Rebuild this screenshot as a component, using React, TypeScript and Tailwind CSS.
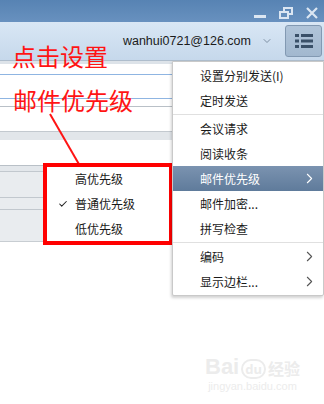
import { ChevronRight, ChevronDown, Check } from 'lucide-react';

const cjk = { fontFamily: '"Noto Sans CJK SC", "Noto Sans", sans-serif' };

type Item = { label: string; sub?: boolean; active?: boolean; sep?: boolean };

const menuItems: Item[] = [
  { label: '设置分别发送(I)' },
  { label: '定时发送' },
  { label: '', sep: true },
  { label: '会议请求' },
  { label: '阅读收条' },
  { label: '邮件优先级', sub: true, active: true },
  { label: '邮件加密...' },
  { label: '拼写检查' },
  { label: '', sep: true },
  { label: '编码', sub: true },
  { label: '显示边栏...', sub: true },
];

function WindowControls() {
  return (
    <div className="flex items-center gap-[13px] pr-[6px] pt-[1px]">
      <div className="mt-[7px] h-[3px] w-[12px] bg-[#dbe6f2]" />
      <svg width="14" height="12" viewBox="0 0 14 12" fill="none" stroke="#dbe6f2" strokeWidth="2">
        <rect x="5" y="1" width="8" height="6" />
        <rect x="1" y="5" width="8" height="6" fill="#6690bd" />
      </svg>
      <svg width="12" height="12" viewBox="0 0 12 12" stroke="#dbe6f2" strokeWidth="2.2">
        <path d="M1 1 L11 11 M11 1 L1 11" />
      </svg>
    </div>
  );
}

function ListIcon() {
  return (
    <svg width="18" height="16" viewBox="0 0 18 16" fill="#3a5068">
      <rect x="0" y="1" width="4" height="3" />
      <rect x="6" y="1" width="12" height="3" />
      <rect x="0" y="6.5" width="4" height="3" />
      <rect x="6" y="6.5" width="12" height="3" />
      <rect x="0" y="12" width="4" height="3" />
      <rect x="6" y="12" width="12" height="3" />
    </svg>
  );
}

function MainMenu() {
  return (
    <div
      className="absolute left-[172px] top-[61px] w-[152px] rounded-b-[2px] border border-[#c9c9c9] bg-white py-[1px] shadow-[-1px_2px_3px_rgba(0,0,0,0.18)]"
      style={cjk}
    >
      {menuItems.map((it, i) =>
        it.sep ? (
          <div key={i} className="my-[1px] h-px bg-[#e0e0e0]" />
        ) : (
          <div
            key={i}
            className={
              it.active
                ? 'flex h-[25px] items-center justify-between bg-gradient-to-b from-[#7b93b0] to-[#5f7b9b] pl-[27px] pr-[5px] text-[12px] text-white'
                : 'flex h-[25px] items-center justify-between pl-[27px] pr-[5px] text-[12px] text-[#1a1a1a]'
            }
          >
            <span>{it.label}</span>
            {it.sub && (
              <ChevronRight
                size={17}
                strokeWidth={1.5}
                className={it.active ? 'text-white' : 'text-[#555]'}
              />
            )}
          </div>
        )
      )}
    </div>
  );
}

function PriorityMenu() {
  return (
    <div
      className="absolute left-[43px] top-[163px] flex h-[82px] w-[130px] flex-col justify-center border-[4px] border-[#ff0000] bg-white text-[12px] text-[#1a1a1a]"
      style={cjk}
    >
      <div className="flex h-[25px] items-center pl-[28px]">高优先级</div>
      <div className="relative flex h-[25px] items-center pl-[28px]">
        <Check size={10} strokeWidth={2.5} className="absolute left-[11px] text-[#222]" />
        普通优先级
      </div>
      <div className="flex h-[25px] items-center pl-[28px]">低优先级</div>
    </div>
  );
}

function Annotations() {
  return (
    <>
      <div
        className="absolute left-[12px] top-[40px] text-[24px] leading-[32px] text-[#ff1414]"
        style={cjk}
      >
        点击设置
      </div>
      <div
        className="absolute left-[13px] top-[84px] text-[24px] leading-[32px] text-[#ff1414]"
        style={cjk}
      >
        邮件优先级
      </div>
      <svg className="absolute left-0 top-0" width="324" height="404">
        <line x1="50" y1="114" x2="80" y2="166" stroke="#ff1414" strokeWidth="2" />
      </svg>
    </>
  );
}

function ListBackground() {
  return (
    <div className="flex flex-col">
      <div className="h-[4px] border-t border-[#aebdcc] bg-[#dde3e9]" />
      <div className="h-[10px] bg-white" />
      <div className="h-px bg-[#8fb5e2]" />
      <div className="h-[23px] bg-white" />
      <div className="h-px bg-[#8fb5e2]" />
      <div className="h-[7px] bg-white" />
      <div className="h-px bg-[#b9c0c7]" />
      <div className="h-[24px] bg-white" />
      <div className="h-[9px] border-t border-[#c3c9cf] bg-[#e2e6ea]" />
      <div className="h-[25px] bg-white" />
      <div className="h-[6px] border-t border-[#b9c0c7] bg-[#e3e7eb]" />
      <div className="h-[26px] border-t border-[#c2c8ce] bg-[#e9ecef]" />
      <div className="h-[12px] border-t border-[#c2c8ce] bg-[#e9ecef]" />
      <div className="h-[32px] border-t border-[#c2c8ce] bg-[#e9ecef]" />
      <div className="h-px bg-[#c8cdd2]" />
    </div>
  );
}

export default function App() {
  return (
    <div className="relative h-[404px] w-[324px] overflow-hidden bg-white">
      <div className="flex h-[22px] items-start justify-end bg-gradient-to-b from-[#5783b3] to-[#6891bf] pt-[6px]">
        <WindowControls />
      </div>
      <div className="flex h-[38px] items-center justify-end bg-gradient-to-b from-[#d9e7f5] to-[#c6d8eb] pr-[2px]">
        <span
          className="text-[12.5px] text-[#1b1b1b]"
          style={{ fontFamily: '"Liberation Sans", Arial, sans-serif' }}
        >
          wanhui0721@126.com
        </span>
        <ChevronDown size={12} strokeWidth={2} className="ml-[10px] mr-[12px] text-[#7d8fa3]" />
        <div className="flex h-[32px] w-[37px] items-center justify-center rounded-[3px] border border-[#8299b2] bg-gradient-to-b from-[#b0c4d9] to-[#a2b8cf]">
          <ListIcon />
        </div>
      </div>
      <ListBackground />

      <div className="absolute left-[205px] top-[355px] flex flex-col items-center text-[#ececec]">
        <div className="flex items-end gap-[2px]">
          <span className="text-[22px] font-bold leading-[24px]" style={{ fontFamily: 'Arial, "Liberation Sans", sans-serif' }}>
            Bai
          </span>
          <span className="rounded-full border-2 border-[#ececec] px-[2px] text-[13px] font-bold leading-[16px]">du</span>
          <span className="text-[16px] font-bold leading-[22px]" style={cjk}>经验</span>
        </div>
        <span className="text-[11px] leading-[14px]" style={{ fontFamily: '"Liberation Sans", Arial, sans-serif' }}>
          jingyan.baidu.com
        </span>
      </div>

      <Annotations />
      <PriorityMenu />
      <MainMenu />
    </div>
  );
}
